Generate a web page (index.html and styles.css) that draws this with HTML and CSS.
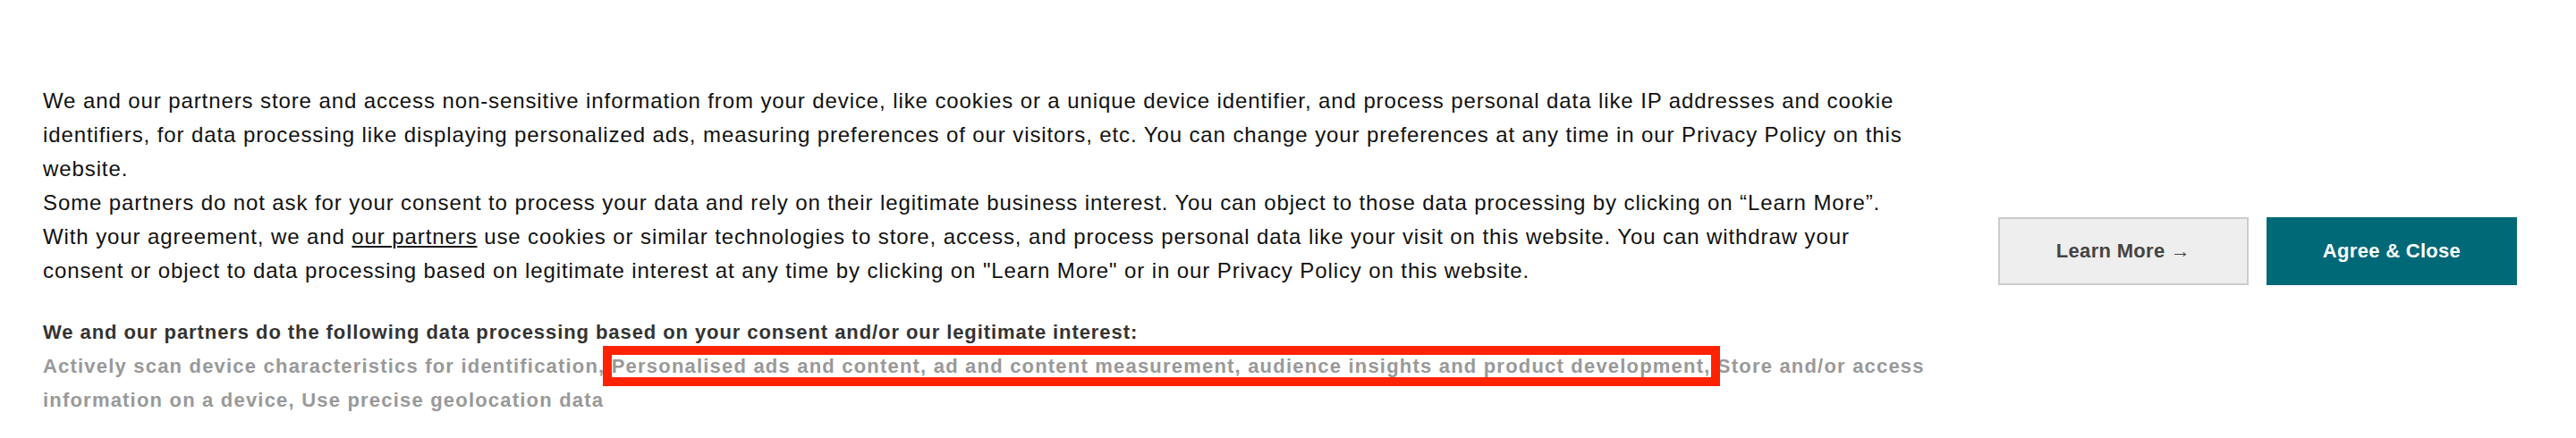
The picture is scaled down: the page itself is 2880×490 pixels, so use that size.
FILE: index.html
```html
<!DOCTYPE html>
<html lang="en">
<head>
    <meta charset="UTF-8">
    <meta name="viewport" content="width=device-width, initial-scale=1.0">
    <title>Consent</title>
    <link rel="stylesheet" href="styles.css">
</head>
<body>
    <div class="consent-banner">
        <div class="consent-text">
            <p class="intro">
                We and our partners store and access non-sensitive information from your device, like cookies or a unique device identifier, and process personal data like IP addresses and cookie identifiers, for data processing like displaying personalized ads, measuring preferences of our visitors, etc. You can change your preferences at any time in our Privacy Policy on this website.<br>
                Some partners do not ask for your consent to process your data and rely on their legitimate business interest. You can object to those data processing by clicking on “Learn More”. With your agreement, we and <a href="#" class="partners-link">our partners</a> use cookies or similar technologies to store, access, and process personal data like your visit on this website. You can withdraw your consent or object to data processing based on legitimate interest at any time by clicking on "Learn More" or in our Privacy Policy on this website.
            </p>
            <p class="purposes-title">We and our partners do the following data processing based on your consent and/or our legitimate interest:</p>
            <p class="purposes">Actively scan device characteristics for identification, <span class="marked">Personalised ads and content, ad and content measurement, audience insights and product development,</span> Store and/or access information on a device, Use precise geolocation data</p>
        </div>
        <div class="consent-buttons">
            <button class="btn btn-more">Learn More <span class="arrow">→</span></button>
            <button class="btn btn-agree">Agree &amp; Close</button>
        </div>
    </div>
</body>
</html>
```

FILE: styles.css
```css
body {
    font-family: "Liberation Sans", Arial, sans-serif;
    background-color: #fff;
    margin: 0;
    padding: 0;
}
.consent-banner {
    display: flex;
    align-items: center;
    padding: 94px 66px 24px 48px;
}
.consent-text {
    width: 2112px;
    flex: 0 0 2112px;
}
.consent-text p {
    margin: 0;
}
.intro {
    font-size: 24px;
    line-height: 38px;
    letter-spacing: 0.9px;
    color: #111;
}
.partners-link {
    color: #111;
}
.purposes-title {
    margin-top: 31px !important;
    font-size: 22px;
    line-height: 38px;
    letter-spacing: 0.92px;
    font-weight: bold;
    color: #333;
}
.purposes {
    font-size: 22px;
    line-height: 38px;
    letter-spacing: 1.2px;
    font-weight: bold;
    color: #999;
}
.marked {
    outline: 10px solid #ff2200;
}
.consent-buttons {
    display: flex;
    gap: 20px;
    margin-left: auto;
}
.btn {
    width: 280px;
    height: 76px;
    font-family: "Liberation Sans", Arial, sans-serif;
    font-size: 22px;
    font-weight: bold;
    letter-spacing: 0.3px;
    cursor: pointer;
}
.btn-more {
    background-color: #eee;
    border: 2px solid #ccc;
    color: #444;
}
.arrow {
    font-weight: normal;
}
.btn-agree {
    background-color: #006978;
    border: none;
    color: #fff;
}
```
